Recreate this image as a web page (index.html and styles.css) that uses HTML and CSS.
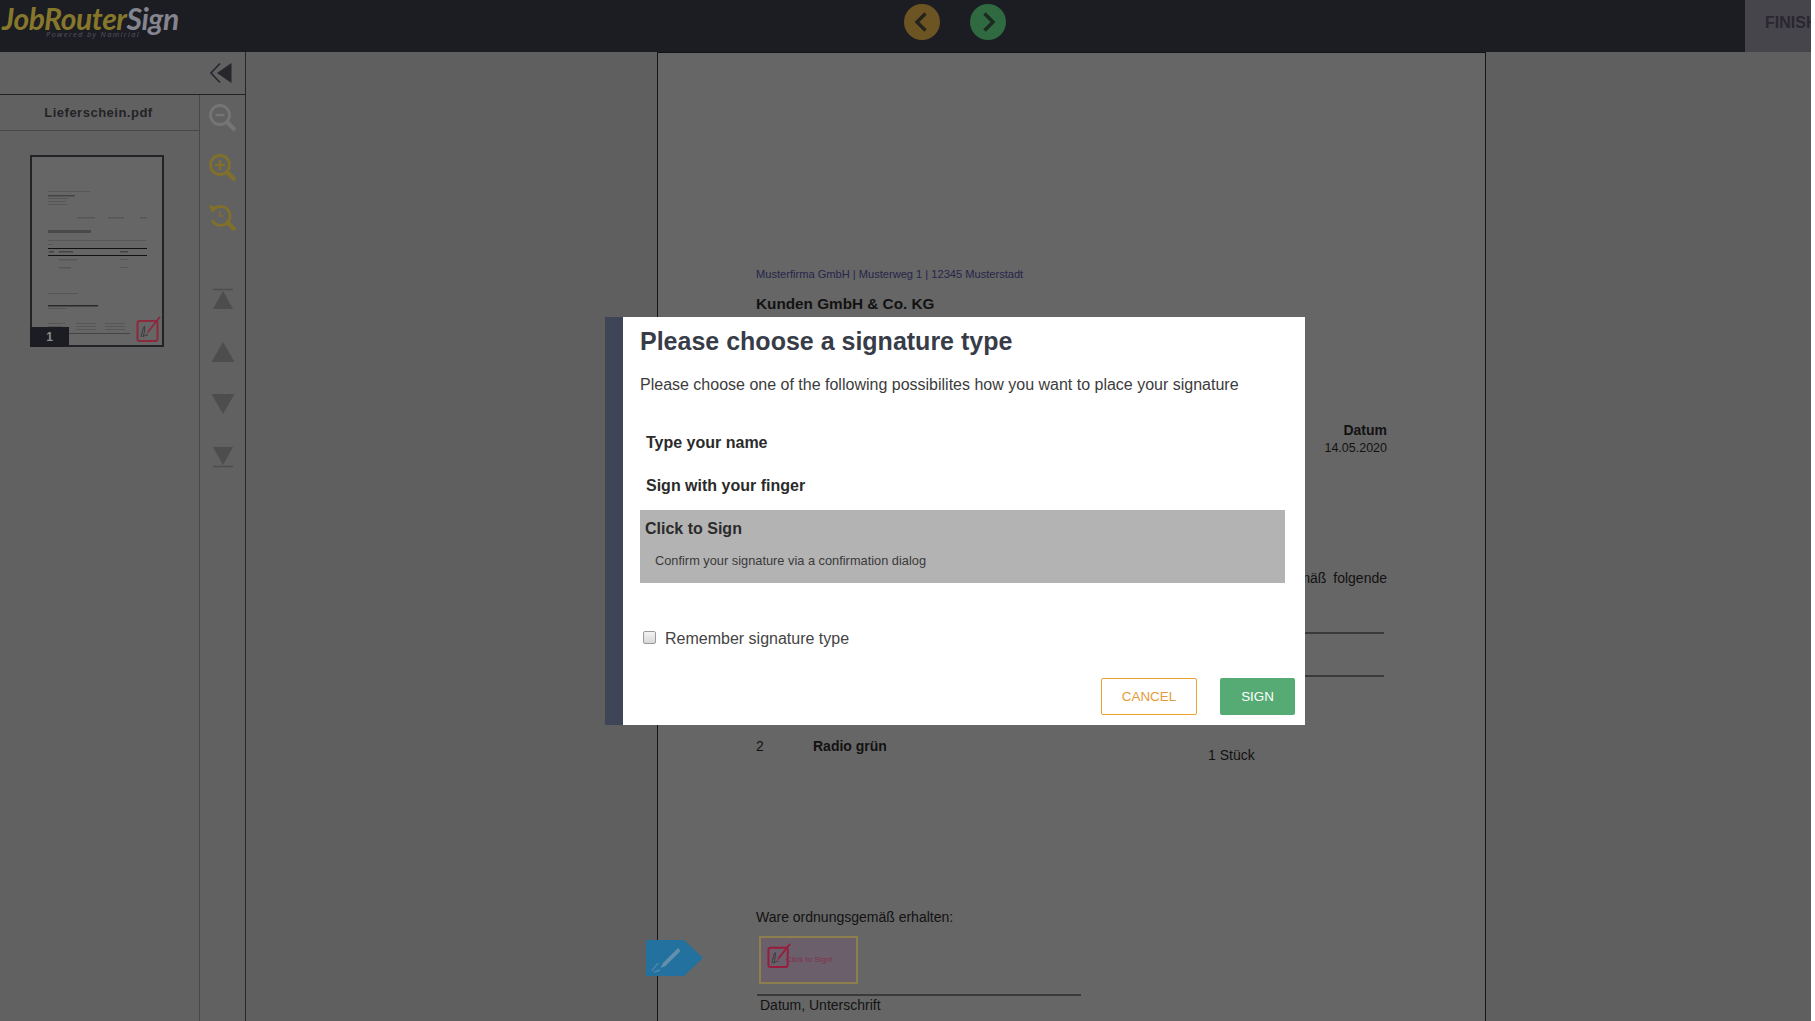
FILE: index.html
```html
<!DOCTYPE html>
<html lang="de">
<head>
<meta charset="utf-8">
<title>JobRouter Sign</title>
<link rel="stylesheet" href="styles.css">
</head>
<body>
<svg class="defs" width="0" height="0" aria-hidden="true">
  <symbol id="sig" viewBox="0 0 26 26">
    <rect x="1.5" y="5" width="20" height="20" rx="2" fill="none" stroke="currentColor" stroke-width="2"/>
    <path d="M25 1 L13 16 L10.5 18.5 L12 14.5 L23 0.5 Z" fill="currentColor"/>
    <path d="M5 21 C6 17 7 12 8.5 10 C9 14 8 18 7 21 C9 19 11 19 12 19" fill="none" stroke="#3a3a3a" stroke-width="1"/>
  </symbol>
</svg>
<div class="app">
  <header class="topbar">
    <div class="logo">
      <div class="logo-word"><span class="logo-job">JobRouter</span><span class="logo-sign">Sign</span></div>
      <div class="logo-sub">Powered by Namirial</div>
    </div>
    <nav class="pager">
      <button class="round round-prev" type="button" aria-label="Previous"><svg width="36" height="36" viewBox="0 0 36 36"><path d="M21.5 9.5 L13 18 L21.5 26.5" fill="none" stroke="#24241f" stroke-width="3.5"/></svg></button>
      <button class="round round-next" type="button" aria-label="Next"><svg width="36" height="36" viewBox="0 0 36 36"><path d="M14.5 9.5 L23 18 L14.5 26.5" fill="none" stroke="#1c2a22" stroke-width="3.5"/></svg></button>
    </nav>
    <div class="finish">FINISH</div>
  </header>
  <main class="workspace">
    <aside class="sidebar">
      <div class="side-top">
        <svg width="24" height="22" viewBox="0 0 24 22"><path d="M11 1.5 L2 11 L11 20.5" fill="none" stroke="#26272c" stroke-width="1.6"/><path d="M22.5 1 L22.5 21 L8 11 Z" fill="#26272c"/></svg>
      </div>
      <div class="side-body">
        <div class="files">
          <div class="file-name">Lieferschein.pdf</div>
          <div class="thumb">
            <svg class="thumb-art" width="130" height="187" viewBox="0 0 130 187">
              <g fill="#565656">
                <rect x="16" y="34" width="42" height="1"/>
                <rect x="16" y="38" width="27" height="1.5" fill="#444"/>
                <rect x="16" y="41" width="20" height="1"/><rect x="16" y="44" width="18" height="1"/><rect x="16" y="47" width="20" height="1"/>
                <rect x="45" y="60" width="18" height="1.5"/><rect x="76" y="60" width="16" height="1.5"/><rect x="108" y="60" width="7" height="1.5"/>
                <rect x="16" y="73" width="43" height="3" fill="#4a4a4a"/>
                <rect x="16" y="83" width="98" height="1"/><rect x="16" y="87" width="5" height="1"/>
                <rect x="16" y="91" width="99" height="1" fill="#111"/>
                <rect x="17" y="94" width="5" height="1.5" fill="#444"/><rect x="27" y="94" width="14" height="1.5" fill="#444"/><rect x="88" y="94" width="8" height="1.5" fill="#444"/>
                <rect x="16" y="98" width="99" height="1" fill="#111"/>
                <rect x="27" y="102" width="18" height="1.5"/><rect x="88" y="102" width="8" height="1"/>
                <rect x="27" y="110" width="12" height="1.5"/><rect x="88" y="110" width="8" height="1"/>
                <rect x="16" y="136" width="30" height="1"/>
                <rect x="16" y="148" width="50" height="1.5" fill="#2a2a2a"/><rect x="16" y="151" width="19" height="1"/>
                <rect x="16" y="166" width="17" height="1"/><rect x="16" y="169" width="15" height="1"/><rect x="16" y="172" width="17" height="1"/>
                <rect x="44" y="166" width="20" height="1"/><rect x="44" y="169" width="20" height="1"/><rect x="44" y="172" width="20" height="1"/>
                <rect x="73" y="166" width="20" height="1"/><rect x="73" y="169" width="20" height="1"/><rect x="73" y="172" width="20" height="1"/>
                <rect x="16" y="176" width="82" height="1" fill="#444"/>
              </g>
            </svg>
            <svg class="thumb-sign"><use href="#sig"/></svg>
            <span class="thumb-num">1</span>
          </div>
        </div>
        <div class="tools">
          <svg class="tool tool-zoom-out" width="30" height="30" viewBox="0 0 30 30"><circle cx="12" cy="12" r="9.5" fill="none" stroke="currentColor" stroke-width="2.8"/><path d="M7.500 12 H16.500" stroke="currentColor" stroke-width="2.400"/><path d="M19 19 L27 27" stroke="currentColor" stroke-width="4"/></svg>
          <svg class="tool tool-zoom-in" width="30" height="30" viewBox="0 0 30 30"><circle cx="12" cy="12" r="9.5" fill="none" stroke="currentColor" stroke-width="2.8"/><path d="M7 12 H17 M12 7 V17" stroke="currentColor" stroke-width="2.400"/><path d="M19 19 L27 27" stroke="currentColor" stroke-width="4"/></svg>
          <svg class="tool tool-zoom-fit" width="30" height="30" viewBox="0 0 30 30"><path d="M5.500 6.500 A9.500 9.500 0 1 1 4 17" fill="none" stroke="currentColor" stroke-width="2.800"/><path d="M1 2 L10 4 L4 10 Z" fill="currentColor"/><path d="M12 8 V13 H15" fill="none" stroke="currentColor" stroke-width="1.400"/><path d="M19 19 L27 27" stroke="currentColor" stroke-width="4"/></svg>
          <div class="tool-gap"></div>
          <svg class="tool-nav" width="24" height="24" viewBox="0 0 24 24"><path d="M2 1.500 H22" stroke="currentColor" stroke-width="1.600"/><path d="M12 3 L22 21 H2 Z" fill="currentColor"/></svg>
          <svg class="tool-nav" width="24" height="24" viewBox="0 0 24 24"><path d="M12 2 L23.500 22 H0.500 Z" fill="currentColor"/></svg>
          <svg class="tool-nav" width="24" height="24" viewBox="0 0 24 24"><path d="M0.500 2 H23.500 L12 22 Z" fill="currentColor"/></svg>
          <svg class="tool-nav" width="24" height="24" viewBox="0 0 24 24"><path d="M2 3 H22 L12 21 Z" fill="currentColor"/><path d="M2 22.500 H22" stroke="currentColor" stroke-width="1.600"/></svg>
        </div>
      </div>
    </aside>
    <section class="viewer">
      <article class="pdf-page">
        <div class="pdf-text sender">Musterfirma GmbH | Musterweg 1 | 12345 Musterstadt</div>
        <div class="pdf-text recipient">Kunden GmbH &amp; Co. KG</div>
        <div class="pdf-text date-label">Datum</div>
        <div class="pdf-text date-value">14.05.2020</div>
        <div class="pdf-text intro">Hiermit liefern wir Ihnen vereinbarungsgemäß folgende</div>
        <div class="pdf-rule rule-a"></div>
        <div class="pdf-rule rule-b"></div>
        <div class="pdf-text pos">2</div>
        <div class="pdf-text item">Radio grün</div>
        <div class="pdf-text qty">1 Stück</div>
        <div class="pdf-text received">Ware ordnungsgemäß erhalten:</div>
        <div class="sig-field"><svg class="sig-field-icon"><use href="#sig"/></svg><span class="sig-field-text">Click to Sign!</span></div>
        <div class="pdf-rule rule-sign"></div>
        <div class="pdf-text sign-caption">Datum, Unterschrift</div>
        <svg class="sign-tag" width="57" height="36" viewBox="0 0 57 36"><path d="M0 0 H38 L57 18 L38 36 H0 Z" fill="#22719f"/><path d="M32 8 L17 23 L14.500 28 L19.500 26 L34.500 11 Z" fill="#6290ac"/><path d="M6 31 C8 27 11 25 12 23 M8 32 L14 30" fill="none" stroke="#5089ad" stroke-width="1.400"/></svg>
      </article>
    </section>
  </main>
  <div class="modal" role="dialog">
    <h1 class="modal-title">Please choose a signature type</h1>
    <p class="modal-lead">Please choose one of the following possibilites how you want to place your signature</p>
    <div class="options">
      <div class="option">Type your name</div>
      <div class="option">Sign with your finger</div>
      <div class="option option-selected">
        <div class="option-name">Click to Sign</div>
        <div class="option-desc">Confirm your signature via a confirmation dialog</div>
      </div>
    </div>
    <label class="remember"><input class="remember-box" type="checkbox"><span>Remember signature type</span></label>
    <div class="actions">
      <button class="btn btn-cancel" type="button">CANCEL</button>
      <button class="btn btn-sign" type="button">SIGN</button>
    </div>
  </div>
</div>
</body>
</html>
```

FILE: styles.css
```css
html, body {
  margin: 0;
  height: 100%;
  background: #fff;
  overflow: hidden;
}
body {
  font-family: "Liberation Sans", Arial, sans-serif;
}
.defs {
  position: absolute;
}
.app {
  position: relative;
  width: 1811px;
  height: 1021px;
  display: flex;
  flex-direction: column;
  overflow: hidden;
  background: #5f5f5f;
}

/* top bar */
.topbar {
  height: 52px;
  flex: none;
  display: flex;
  align-items: center;
  background: #1b1d23;
}
.logo {
  width: 904px;
  padding-left: 2px;
  height: 52px;
  box-sizing: border-box;
  flex: none;
}
.logo-word {
  font-family: Lato, sans-serif;
  font-weight: 700;
  font-style: italic;
  font-size: 30px;
  line-height: 26px;
  letter-spacing: -.4px;
  height: 26px;
  margin-top: 5px;
}
.logo-job {
  color: #86772b;
}
.logo-sign {
  color: #85858f;
}
.logo-sub {
  margin: -1px 0 0 44px;
  font-family: "Open Sans", sans-serif;
  font-style: italic;
  font-size: 7.5px;
  line-height: 8px;
  letter-spacing: 1.3px;
  color: #55555f;
}
.pager {
  display: flex;
  gap: 30px;
  padding-bottom: 8px;
}
.round {
  width: 36px;
  height: 36px;
  padding: 0;
  border: 0;
  border-radius: 50%;
  display: block;
}
.round svg {
  display: block;
}
.round-prev {
  background: #6c5522;
}
.round-next {
  background: #2f6a40;
}
.finish {
  margin-left: auto;
  align-self: stretch;
  width: 66px;
  box-sizing: border-box;
  padding: 14px 0 0 20px;
  overflow: hidden;
  white-space: nowrap;
  background: #45454b;
  color: #2b2632;
  font-weight: 700;
  font-size: 16px;
  line-height: 18px;
}

/* sidebar */
.workspace {
  flex: 1;
  min-height: 0;
  display: flex;
}
.sidebar {
  width: 246px;
  flex: none;
  box-sizing: border-box;
  display: flex;
  flex-direction: column;
  background: #616161;
  border-right: 1px solid #262626;
}
.side-top {
  height: 43px;
  flex: none;
  box-sizing: border-box;
  display: flex;
  align-items: center;
  justify-content: flex-end;
  padding-right: 12px;
  border-bottom: 1px solid #222;
}
.side-body {
  flex: 1;
  display: flex;
  min-height: 0;
}
.files {
  width: 200px;
  flex: none;
  box-sizing: border-box;
  border-right: 1px solid #484848;
}
.file-name {
  height: 36px;
  box-sizing: border-box;
  border-bottom: 1px solid #464646;
  padding-right: 2px;
  text-align: center;
  font-size: 13px;
  font-weight: 700;
  line-height: 36px;
  letter-spacing: .5px;
  color: #232326;
}
.thumb {
  position: relative;
  width: 134px;
  height: 192px;
  box-sizing: border-box;
  margin: 24px 0 0 30px;
  border: 2px solid #222327;
  background: #666;
}
.thumb-art {
  display: block;
}
.thumb-sign {
  position: absolute;
  left: 104px;
  top: 159px;
  width: 26px;
  height: 26px;
  color: #8a2a3c;
}
.thumb-num {
  position: absolute;
  left: -2px;
  bottom: -2px;
  width: 39px;
  height: 20px;
  background: #1b1d23;
  color: #8d8d8d;
  text-align: center;
  font-size: 12px;
  font-weight: 700;
  line-height: 20px;
}
.tools {
  flex: 1;
  display: flex;
  flex-direction: column;
  align-items: center;
  padding-top: 8px;
  gap: 20px;
}
.tool {
  display: block;
  flex: none;
  margin-left: 1px;
}
.tool-zoom-out {
  color: #757575;
}
.tool-zoom-in, .tool-zoom-fit {
  color: #80702a;
}
.tool-gap {
  height: 22px;
  margin-bottom: -7px;
}
.tool-nav {
  display: block;
  flex: none;
  margin-bottom: 8px;
  color: #4d4d4d;
}

/* document */
.viewer {
  flex: 1;
  min-width: 0;
  padding-left: 411px;
  overflow: hidden;
}
.pdf-page {
  position: relative;
  width: 829px;
  height: 1172px;
  box-sizing: border-box;
  border: 1px solid #141414;
  background: #666;
  color: #121212;
}
.pdf-text {
  position: absolute;
  white-space: nowrap;
  font-size: 14px;
  line-height: 16px;
}
.pdf-rule {
  position: absolute;
  height: 2px;
  background: #3a3a3a;
}
.sender {
  left: 98px;
  top: 214px;
  font-size: 11.1px;
  line-height: 14px;
  color: #25254a;
}
.recipient {
  left: 98px;
  top: 242px;
  font-size: 15.3px;
  line-height: 18px;
  font-weight: 700;
}
.date-label {
  right: 98px;
  top: 369px;
  font-weight: 700;
}
.date-value {
  right: 98px;
  top: 388px;
  font-size: 12.5px;
  line-height: 15px;
}
.intro {
  right: 98px;
  top: 517px;
  word-spacing: 3px;
}
.rule-a {
  left: 99px;
  width: 627px;
  top: 579px;
}
.rule-b {
  left: 99px;
  width: 627px;
  top: 622px;
}
.pos {
  left: 98px;
  top: 685px;
}
.item {
  left: 155px;
  top: 685px;
  font-weight: 700;
}
.qty {
  left: 550px;
  top: 694px;
}
.received {
  left: 98px;
  top: 856px;
}
.sig-field {
  position: absolute;
  left: 101px;
  top: 883px;
  width: 99px;
  height: 48px;
  box-sizing: border-box;
  border: 2px solid #8c7f4c;
  background: #6a5f6a;
}
.sig-field-icon {
  position: absolute;
  left: 6px;
  top: 5px;
  width: 25px;
  height: 25px;
  color: #981c3c;
}
.sig-field-text {
  position: absolute;
  left: 25px;
  top: 17px;
  white-space: nowrap;
  font-size: 8px;
  line-height: 10px;
  color: #85304e;
}
.rule-sign {
  left: 99px;
  width: 324px;
  top: 941px;
}
.sign-caption {
  left: 102px;
  top: 944px;
}
.sign-tag {
  position: absolute;
  left: -12px;
  top: 887px;
}

/* dialog */
.modal {
  position: absolute;
  left: 605px;
  top: 317px;
  width: 700px;
  height: 408px;
  box-sizing: border-box;
  padding: 9px 10px 0 17px;
  border-left: 18px solid #3e4556;
  background: #fff;
  color: #333;
}
.modal-title {
  margin: 0 0 19px;
  font-size: 25px;
  line-height: 30px;
  font-weight: 700;
  color: #373c48;
}
.modal-lead {
  margin: 0 10px 29px 0;
  font-size: 16px;
  line-height: 20px;
  color: #3c3c3c;
}
.options {
  margin-right: 10px;
}
.option {
  padding: 9px 6px 14px;
  font-size: 16px;
  line-height: 20px;
  font-weight: 700;
  color: #2b2b2b;
}
.option-selected {
  padding: 9px 5px 14px;
  background: #b4b3b4;
}
.option-name {
  font-size: 16px;
  line-height: 20px;
}
.option-desc {
  margin-top: 14px;
  padding-left: 10px;
  font-size: 12.8px;
  line-height: 16px;
  font-weight: 400;
  color: #3a3a3a;
}
.remember {
  margin: 46px 0 0 3px;
  display: flex;
  align-items: flex-start;
  gap: 9px;
  font-size: 16px;
  line-height: 20px;
  color: #444;
}
.remember-box {
  appearance: none;
  width: 13px;
  height: 13px;
  margin: 2px 0 0;
  box-sizing: border-box;
  border: 1px solid #9a9a9a;
  border-radius: 2px;
  background: linear-gradient(#f4f4f4, #d8d8d8);
}
.actions {
  margin-top: 29px;
  display: flex;
  justify-content: flex-end;
  gap: 23px;
}
.btn {
  height: 37px;
  box-sizing: border-box;
  padding: 0 0 1px;
  border-radius: 2px;
  font-family: "Liberation Sans", Arial, sans-serif;
  font-size: 13.4px;
}
.btn-cancel {
  width: 96px;
  border: 1px solid #eca231;
  background: #fff;
  color: #e69a3a;
}
.btn-sign {
  width: 75px;
  border: 0;
  background: #55ab73;
  color: #fff;
}
```
